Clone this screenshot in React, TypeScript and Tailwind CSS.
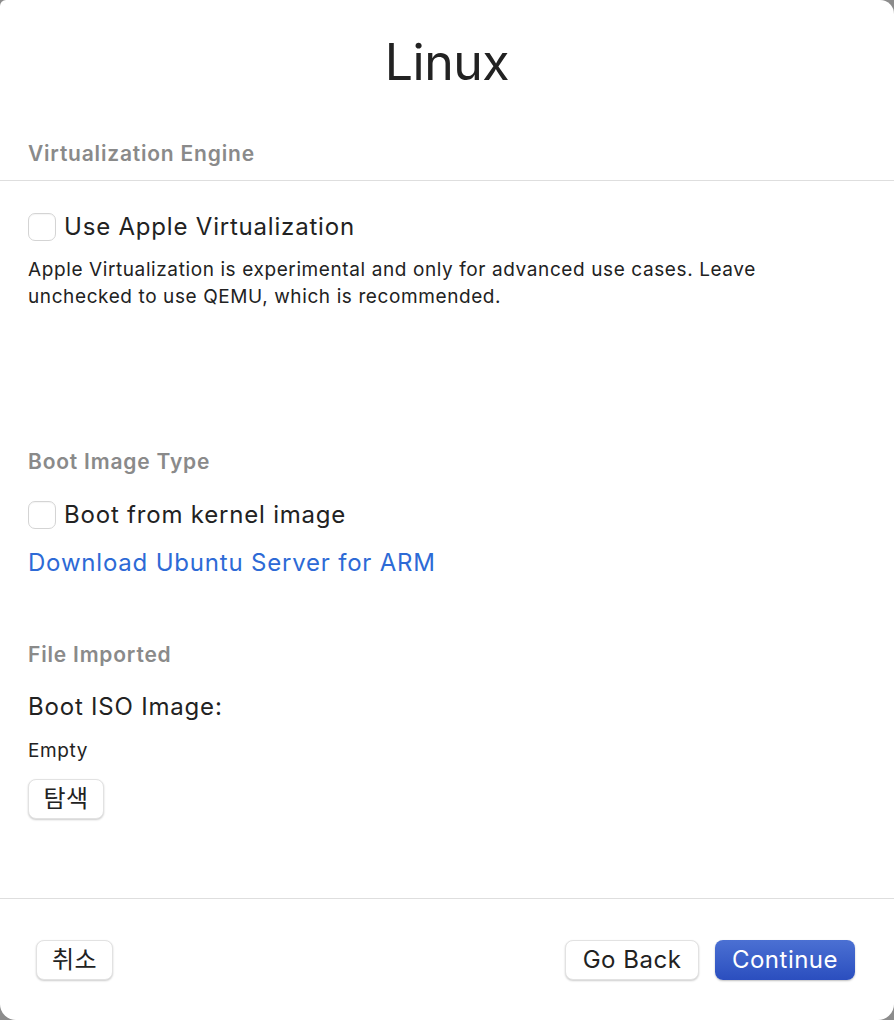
import React from "react";

function Checkbox() {
  return (
    <div className="w-[28px] h-[28px] rounded-[7px] border border-[#d4d4d4] bg-white shadow-[inset_0_1px_1px_rgba(0,0,0,0.04)] shrink-0" />
  );
}

function MacButton({ children, primary = false, className = "" }: { children: React.ReactNode; primary?: boolean; className?: string }) {
  if (primary) {
    return (
      <button className={`h-[40px] rounded-[8px] bg-gradient-to-b from-[#4b70d3] to-[#2b4ebf] text-white text-[24px] leading-none tracking-[0.5px] shadow-[0_1px_2px_rgba(0,0,0,0.25)] ${className}`}>
        {children}
      </button>
    );
  }
  return (
    <button className={`h-[40px] rounded-[8px] bg-white border border-[#e2e2e2] text-[#222] text-[24px] leading-none tracking-[0.5px] shadow-[0_1px_2px_rgba(0,0,0,0.2)] ${className}`}>
      {children}
    </button>
  );
}

export default function App() {
  return (
    <div className="w-[894px] h-[1020px] bg-[#8c8c8c]" style={{ fontFamily: 'Inter, "Noto Sans CJK KR", sans-serif' }}>
      <div className="w-full h-full bg-white rounded-tl-[6px] rounded-tr-[14px] rounded-b-[16px] flex flex-col overflow-hidden">
        <div className="h-[126px] flex items-center justify-center pb-[3px]">
          <h1 className="text-[50px] leading-none text-[#222] tracking-[-0.5px]">Linux</h1>
        </div>
        <div className="px-[28px] h-[54px] flex items-start">
          <span className="text-[21px] leading-[26px] font-semibold text-[#8a8a8a] tracking-[0.8px] mt-[15px]">Virtualization Engine</span>
        </div>
        <div className="h-px bg-[#dedede]" />
        <div className="flex-1 flex flex-col px-[28px]">
          <div className="flex items-center gap-[8px] mt-[31px]">
            <Checkbox />
            <span className="text-[24px] leading-[30px] text-[#222] tracking-[0.8px]">Use Apple Virtualization</span>
          </div>
          <p className="mt-[14px] text-[19px] leading-[27px] text-[#222] tracking-[0.6px] w-[800px]">
            Apple Virtualization is experimental and only for advanced use cases. Leave unchecked to use QEMU, which is recommended.
          </p>
          <div className="mt-[139px] text-[21px] leading-[26px] font-semibold text-[#8a8a8a] tracking-[0.8px]">Boot Image Type</div>
          <div className="flex items-center gap-[8px] mt-[25px]">
            <Checkbox />
            <span className="text-[24px] leading-[30px] text-[#222] tracking-[0.8px]">Boot from kernel image</span>
          </div>
          <div className="mt-[18px] text-[24px] leading-[30px] text-[#2d6ad6] tracking-[0.8px]">Download Ubuntu Server for ARM</div>
          <div className="mt-[64px] text-[21px] leading-[26px] font-semibold text-[#8a8a8a] tracking-[0.8px]">File Imported</div>
          <div className="mt-[24px] text-[24px] leading-[30px] text-[#222] tracking-[0.8px]">Boot ISO Image:</div>
          <div className="mt-[17px] text-[19px] leading-[24px] text-[#222] tracking-[0.6px]">Empty</div>
          <div className="mt-[16px]">
            <MacButton className="w-[76px]">탐색</MacButton>
          </div>
        </div>
        <div className="h-px bg-[#dedede] mb-[41px]" />
        <div className="flex items-center px-[36px] pr-[39px] pb-[40px]">
          <MacButton className="w-[77px]">취소</MacButton>
          <div className="flex-1" />
          <MacButton className="w-[134px] mr-[16px]">Go Back</MacButton>
          <MacButton primary className="w-[140px]">Continue</MacButton>
        </div>
      </div>
    </div>
  );
}
